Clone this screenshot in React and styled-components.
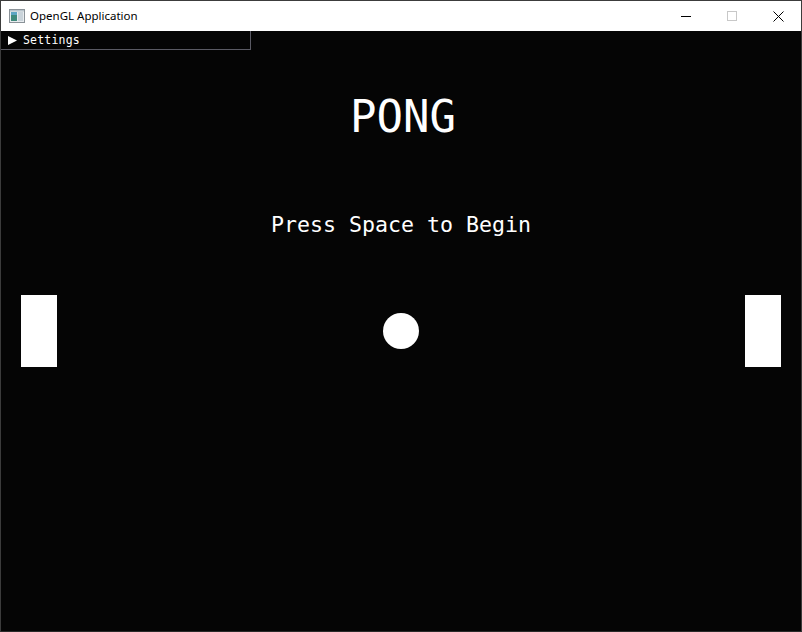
import React from "react";
import styled, { createGlobalStyle } from "styled-components";

const GlobalStyle = createGlobalStyle`
  html, body {
    margin: 0;
    padding: 0;
    background: #ffffff;
  }
`;

const Window = styled.div`
  width: 802px;
  height: 632px;
  box-sizing: border-box;
  border: 1px solid #3c3c3c;
  border-bottom-color: #2a2a2a;
  display: flex;
  flex-direction: column;
  background: #050505;
`;

const TitleBar = styled.div`
  height: 30px;
  flex: none;
  background: #ffffff;
  display: flex;
  align-items: center;
  padding-left: 8px;
`;

const AppIcon = styled.svg`
  width: 16px;
  height: 16px;
  margin-right: 5px;
`;

const Title = styled.span`
  font-family: "Noto Sans", "Liberation Sans", sans-serif;
  font-size: 11.5px;
  color: #000000;
  flex: 1;
  margin-top: -1px;
`;

const Controls = styled.div`
  display: flex;
  height: 100%;
`;

const ControlButton = styled.div`
  width: 46px;
  height: 100%;
  display: flex;
  align-items: center;
  justify-content: center;
`;

const Canvas = styled.div`
  position: relative;
  flex: 1;
  background: #050505;
  display: flex;
  flex-direction: column;
  align-items: center;
  padding-top: 64px;
`;

const Heading = styled.h1`
  margin: 0 0 0 4px;
  font-family: "DejaVu Sans Mono", "Liberation Mono", monospace;
  font-weight: normal;
  font-size: 44px;
  line-height: 44px;
  color: #ffffff;
`;

const Prompt = styled.p`
  margin: 75px 0 0 0;
  font-family: "DejaVu Sans Mono", "Liberation Mono", monospace;
  font-size: 21.6px;
  line-height: 22px;
  color: #ffffff;
`;

const SettingsPanel = styled.div`
  position: absolute;
  left: 0;
  top: 0;
  width: 250px;
  height: 19px;
  box-sizing: border-box;
  border: 1px solid #5a5a64;
  border-top: none;
  border-left: none;
  background: #050505;
  display: flex;
  align-items: center;
  padding-left: 7px;
  gap: 6px;
`;

const SettingsLabel = styled.span`
  font-family: "DejaVu Sans Mono", "Liberation Mono", monospace;
  font-size: 11.5px;
  color: #ffffff;
  letter-spacing: 0.2px;
`;

const Paddle = styled.div`
  position: absolute;
  top: 264px;
  left: ${(p) => p.$x}px;
  width: 36px;
  height: 72px;
  background: #ffffff;
`;

const Ball = styled.div`
  position: absolute;
  left: 382px;
  top: 282px;
  width: 36px;
  height: 36px;
  border-radius: 50%;
  background: #ffffff;
`;

export default function App() {
  return (
    <>
      <GlobalStyle />
      <Window>
        <TitleBar>
          <AppIcon viewBox="0 0 16 16">
            <rect x="0.5" y="1.5" width="15" height="13" fill="#e8ecef" stroke="#8a9298" />
            <rect x="2" y="4" width="6" height="9" fill="#3f8a7c" />
            <rect x="2" y="4" width="6" height="3" fill="#5ea6c4" />
            <rect x="9" y="4" width="5" height="9" fill="#c9d3da" />
            <rect x="1" y="2" width="14" height="1.5" fill="#b8c4cc" />
          </AppIcon>
          <Title>OpenGL Application</Title>
          <Controls>
            <ControlButton>
              <svg width="10" height="10" viewBox="0 0 10 10">
                <line x1="0" y1="5.5" x2="10" y2="5.5" stroke="#000" strokeWidth="1" />
              </svg>
            </ControlButton>
            <ControlButton>
              <svg width="10" height="10" viewBox="0 0 10 10">
                <rect x="0.5" y="0.5" width="9" height="9" fill="none" stroke="#c8c8c8" strokeWidth="1" />
              </svg>
            </ControlButton>
            <ControlButton>
              <svg width="11" height="11" viewBox="0 0 11 11">
                <path d="M0.5 0.5 L10.5 10.5 M10.5 0.5 L0.5 10.5" stroke="#000" strokeWidth="1" />
              </svg>
            </ControlButton>
          </Controls>
        </TitleBar>
        <Canvas>
          <SettingsPanel>
            <svg width="9" height="9" viewBox="0 0 9 9">
              <polygon points="0,0 9,4.5 0,9" fill="#ffffff" />
            </svg>
            <SettingsLabel>Settings</SettingsLabel>
          </SettingsPanel>
          <Heading>PONG</Heading>
          <Prompt>Press Space to Begin</Prompt>
          <Paddle $x={20} />
          <Ball />
          <Paddle $x={744} />
        </Canvas>
      </Window>
    </>
  );
}
